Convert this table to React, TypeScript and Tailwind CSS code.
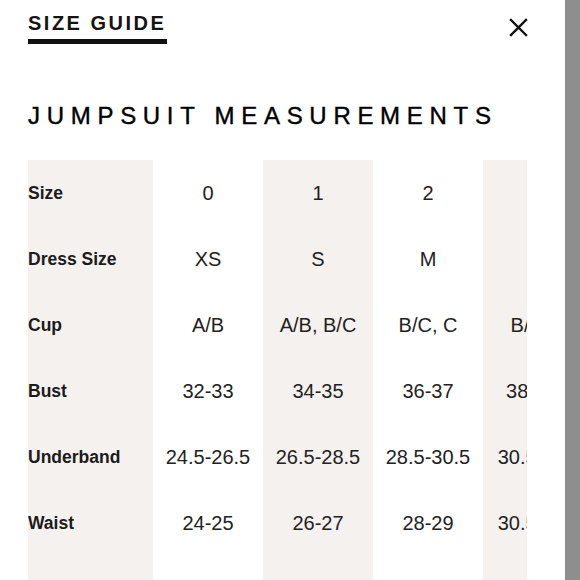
import React from "react";

const rows = ["Size", "Dress Size", "Cup", "Bust", "Underband", "Waist"];

const columns = [
  { shade: false, width: "w-[110px]", values: ["0", "XS", "A/B", "32-33", "24.5-26.5", "24-25"] },
  { shade: true, width: "w-[110px]", values: ["1", "S", "A/B, B/C", "34-35", "26.5-28.5", "26-27"] },
  { shade: false, width: "w-[110px]", values: ["2", "M", "B/C, C", "36-37", "28.5-30.5", "28-29"] },
  { shade: true, width: "w-[114px]", values: ["3", "L", "B/C, C", "38.5-40", "30.5-32.5", "30.5-31.5"] },
];

const App = () => {
  return (
    <div className="flex h-[580px] w-[580px] overflow-hidden bg-white font-['Liberation_Sans',Arial,sans-serif] text-[#1b1b1b]">
      {/* panel */}
      <div className="flex flex-1 flex-col pl-[28px]">
        <div className="flex items-start justify-between pt-[13px]">
          <div className="flex flex-col">
            <div className="text-[20px] leading-[20px] font-bold tracking-[2.5px] text-[#141414]">SIZE GUIDE</div>
            <div className="mt-[6px] h-[5px] w-[139px] bg-[#111]" />
          </div>
          <button className="mt-[5px] mr-[37px]">
            <svg width="19" height="19" viewBox="0 0 19 19" stroke="#111" strokeWidth="2.4" strokeLinecap="square">
              <path d="M2 2 L17 17 M17 2 L2 17" />
            </svg>
          </button>
        </div>

        <div className="mt-[60px] text-[24px] leading-[24px] whitespace-nowrap tracking-[6.7px] text-black [-webkit-text-stroke:0.4px_black]">
          JUMPSUIT MEASUREMENTS
        </div>

        {/* table */}
        <div className="mt-[32px] flex w-[499px] flex-1 overflow-hidden">
          <div className="flex w-[125px] shrink-0 flex-col bg-[#f5f1ee]">
            {rows.map((r) => (
              <div key={r} className="flex h-[66px] items-center text-[17.5px] font-bold whitespace-nowrap">
                {r}
              </div>
            ))}
          </div>
          {columns.map((c, i) => (
            <div
              key={i}
              className={`flex ${c.width} shrink-0 flex-col ${c.shade ? "bg-[#f5f1ee]" : "bg-white"}`}
            >
              {c.values.map((v, j) => (
                <div key={j} className="flex h-[66px] items-center justify-center text-[20px] whitespace-nowrap text-[#222]">
                  {v}
                </div>
              ))}
            </div>
          ))}
        </div>
      </div>

      {/* scrollbar strip */}
      <div className="w-[15px] shrink-0 bg-[#8e8e8e]" />
    </div>
  );
};

export default App;
